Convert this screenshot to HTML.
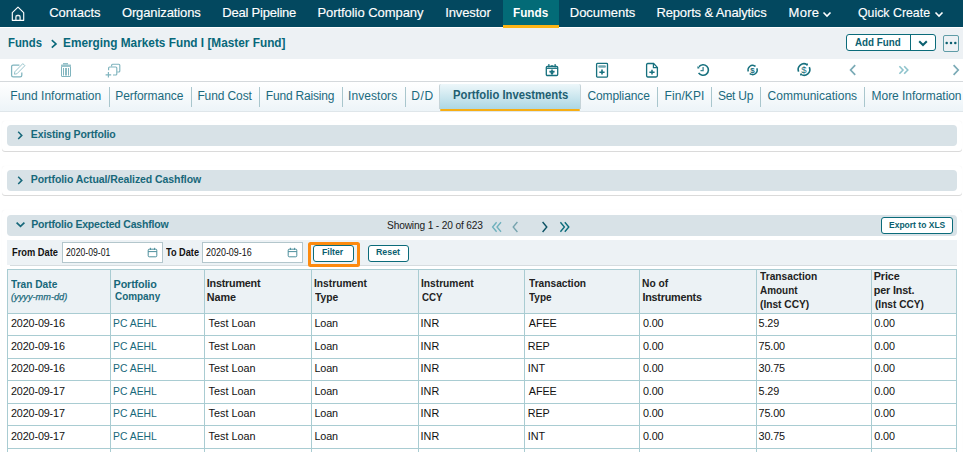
<!DOCTYPE html>
<html><head><meta charset="utf-8"><style>
html,body{margin:0;padding:0;width:963px;height:452px;overflow:hidden;background:#fff;position:relative;font-family:"Liberation Sans", sans-serif}
.t{position:absolute;white-space:nowrap;line-height:20px;font-family:"Liberation Sans", sans-serif}
svg{overflow:visible}
</style></head><body>
<div style="position:absolute;left:0px;top:0px;width:963px;height:27px;background:#03485f"></div>
<div style="position:absolute;left:0px;top:27px;width:963px;height:1px;background:#ffffff"></div>
<svg style="position:absolute;left:0px;top:0px" width="40" height="27" viewBox="0 0 40 27"><path d="M12.3 12.7 L18 7.2 L23.7 12.7 V20.3 H12.3 Z" fill="none" stroke="#fff" stroke-width="1.15" stroke-linejoin="round"/><path d="M15.9 20.3 V16.9 Q15.9 15.5 17.3 15.5 H18.7 Q20.1 15.5 20.1 16.9 V20.3" fill="none" stroke="#e8eef0" stroke-width="1.3"/></svg>
<div class="t" style="left:49.20px;top:3.00px;font-size:13px;font-weight:normal;color:#ffffff;letter-spacing:0.014px;font-style:normal;-webkit-text-stroke:0.15px #fff">Contacts</div>
<div class="t" style="left:121.90px;top:3.00px;font-size:13px;font-weight:normal;color:#ffffff;letter-spacing:-0.108px;font-style:normal;-webkit-text-stroke:0.15px #fff">Organizations</div>
<div class="t" style="left:222.30px;top:3.00px;font-size:13px;font-weight:normal;color:#ffffff;letter-spacing:-0.217px;font-style:normal;-webkit-text-stroke:0.15px #fff">Deal Pipeline</div>
<div class="t" style="left:317.40px;top:3.00px;font-size:13px;font-weight:normal;color:#ffffff;letter-spacing:-0.050px;font-style:normal;-webkit-text-stroke:0.15px #fff">Portfolio Company</div>
<div class="t" style="left:445.20px;top:3.00px;font-size:13px;font-weight:normal;color:#ffffff;letter-spacing:-0.100px;font-style:normal;-webkit-text-stroke:0.15px #fff">Investor</div>
<div class="t" style="left:569.80px;top:3.00px;font-size:13px;font-weight:normal;color:#ffffff;letter-spacing:-0.025px;font-style:normal;-webkit-text-stroke:0.15px #fff">Documents</div>
<div class="t" style="left:656.40px;top:3.00px;font-size:13px;font-weight:normal;color:#ffffff;letter-spacing:-0.133px;font-style:normal;-webkit-text-stroke:0.15px #fff">Reports &amp; Analytics</div>
<div class="t" style="left:788.50px;top:3.00px;font-size:13px;font-weight:normal;color:#ffffff;letter-spacing:0.300px;font-style:normal;-webkit-text-stroke:0.15px #fff">More</div>
<div class="t" style="left:857.65px;top:3.00px;font-size:13px;font-weight:normal;color:#ffffff;letter-spacing:0.000px;font-style:normal;transform:scaleX(0.9493);transform-origin:0 0;-webkit-text-stroke:0.15px #fff">Quick Create</div>
<div style="position:absolute;left:503px;top:0px;width:56px;height:25px;background:#036b77"></div>
<div style="position:absolute;left:503px;top:25px;width:56px;height:3px;background:#fdb515"></div>
<div class="t" style="left:512.80px;top:3.00px;font-size:13px;font-weight:bold;color:#ffffff;letter-spacing:0.000px;font-style:normal;transform:scaleX(0.9026);transform-origin:0 0;">Funds</div>
<svg style="position:absolute;left:822px;top:9px" width="10" height="10" viewBox="0 0 10 10"><path d="M1.5 3.5 L5 7 L8.5 3.5" fill="none" stroke="#fff" stroke-width="1.6"/></svg>
<svg style="position:absolute;left:934px;top:9px" width="10" height="10" viewBox="0 0 10 10"><path d="M1.5 3.5 L5 7 L8.5 3.5" fill="none" stroke="#fff" stroke-width="1.6"/></svg>
<div style="position:absolute;left:0px;top:28px;width:963px;height:31px;background:#edf1f4"></div>
<div class="t" style="left:7.63px;top:33.00px;font-size:13px;font-weight:bold;color:#08687a;letter-spacing:0.000px;font-style:normal;transform:scaleX(0.8711);transform-origin:0 0;">Funds</div>
<svg style="position:absolute;left:50px;top:39px" width="8" height="10" viewBox="0 0 8 10"><path d="M1.8 1.2 L6 4.9 L1.8 8.6" fill="none" stroke="#08687a" stroke-width="1.6"/></svg>
<div class="t" style="left:62.66px;top:33.00px;font-size:12.6px;font-weight:bold;color:#08687a;letter-spacing:0.000px;font-style:normal;transform:scaleX(0.9381);transform-origin:0 0;">Emerging Markets Fund I [Master Fund]</div>
<div style="position:absolute;left:846px;top:34px;width:89.5px;height:16.5px;background:#fff;border:1px solid #0b6b7a;border-radius:3px;box-sizing:border-box"></div>
<div style="position:absolute;left:910px;top:34px;width:1px;height:16.5px;background:#0b6b7a"></div>
<div class="t" style="left:854.70px;top:32.00px;font-size:10.8px;font-weight:bold;color:#0b5f70;letter-spacing:0.000px;font-style:normal;transform:scaleX(0.9060);transform-origin:0 0;">Add Fund</div>
<svg style="position:absolute;left:917px;top:39px" width="12" height="9" viewBox="0 0 12 9"><path d="M2.2 2.2 L6 6 L9.8 2.2" fill="none" stroke="#0b6070" stroke-width="2"/></svg>
<div style="position:absolute;left:943px;top:35px;width:16px;height:16.5px;border:1.3px solid #5f9ca7;border-radius:2px;box-sizing:border-box"></div>
<svg style="position:absolute;left:944px;top:40px" width="14" height="6" viewBox="0 0 14 6"><circle cx="2.7" cy="3" r="1.25" fill="#0b5f70"/><circle cx="7" cy="3" r="1.25" fill="#0b5f70"/><circle cx="11.3" cy="3" r="1.25" fill="#0b5f70"/></svg>
<div style="position:absolute;left:0px;top:59px;width:963px;height:22px;background:#fff"></div>
<div style="position:absolute;left:0px;top:81px;width:963px;height:1px;background:#d5d9dc"></div>
<svg style="position:absolute;left:10px;top:62px" width="17" height="16" viewBox="0 0 17 16"><path d="M9.4 3 H3.2 Q1.6 3 1.6 4.6 V13.2 Q1.6 14.8 3.2 14.8 H10.2 Q11.8 14.8 11.8 13.2 V10.4" fill="none" stroke="#7fb4be" stroke-width="1.25"/><path d="M4.4 12.2 L4.8 9.8 L12.8 1.6 L14.9 3.7 L6.9 11.8 Z" fill="none" stroke="#7fb4be" stroke-width="0.95" stroke-linejoin="round" opacity="0.85"/></svg>
<svg style="position:absolute;left:60px;top:62px" width="12" height="16" viewBox="0 0 12 16"><rect x="3" y="1" width="5" height="1.5" fill="#7fb4be" opacity="0.85"/><rect x="1" y="2.5" width="10" height="2.5" rx="0.5" fill="#7fb4be" opacity="0.8"/><path d="M1.5 5 V14 Q1.5 14.5 2 14.5 H10 Q10.5 14.5 10.5 14 V5" fill="none" stroke="#7fb4be" stroke-width="1"/><rect x="3" y="6" width="1" height="7.5" fill="#7fb4be"/><rect x="5" y="6" width="2" height="7.5" fill="#7fb4be" opacity="0.9"/><rect x="8" y="6" width="1" height="7.5" fill="#7fb4be"/></svg>
<svg style="position:absolute;left:104px;top:61.6px" width="18" height="18" viewBox="0 0 18 18"><path d="M7.6 4.4 V3.2 Q7.6 2.2 8.6 2.2 H14.8 Q15.8 2.2 15.8 3.2 V9 Q15.8 10 14.8 10 H13.2" fill="none" stroke="#7fb4be" stroke-width="1.15"/><path d="M4.6 8.2 V6 Q4.6 5 5.6 5 H11.8 Q12.8 5 12.8 6 V12 Q12.8 13 11.8 13 H9" fill="none" stroke="#7fb4be" stroke-width="1.15"/><path d="M4.4 10 V15.6 M1.6 12.8 H7.2" stroke="#7fb4be" stroke-width="1.15"/></svg>
<svg style="position:absolute;left:544px;top:62px" width="16" height="16" viewBox="0 0 16 16"><rect x="2.3" y="4.3" width="11.4" height="9.2" rx="1.1" fill="none" stroke="#16707e" stroke-width="1.3"/><rect x="2.3" y="5.6" width="11.4" height="1.3" fill="#16707e"/><rect x="4.2" y="2" width="1.3" height="3.4" rx="0.6" fill="#16707e"/><rect x="10.5" y="2" width="1.3" height="3.4" rx="0.6" fill="#16707e"/><rect x="6.7" y="3" width="2.6" height="1.4" rx="0.6" fill="#16707e" opacity="0.7"/><path d="M8 7.6 V12.2 M5.4 9.6 H10.6" stroke="#16707e" stroke-width="1.6"/><path d="M6.6 10.4 L8 12 L9.4 10.4" fill="none" stroke="#16707e" stroke-width="1.2"/></svg>
<svg style="position:absolute;left:594px;top:61px" width="16" height="18" viewBox="0 0 16 18"><rect x="2.6" y="2.4" width="10.9" height="13.7" rx="0.8" fill="none" stroke="#16707e" stroke-width="1.3"/><rect x="4.2" y="4.2" width="7.8" height="2.6" rx="1.3" fill="#16707e" opacity="0.6"/><path d="M8 8.6 V13.6 M5.4 11.2 H10.6" stroke="#16707e" stroke-width="1.6"/></svg>
<svg style="position:absolute;left:644px;top:61px" width="16" height="18" viewBox="0 0 16 18"><path d="M3.8 2.5 H9.6 L13.4 6.4 V14.6 Q13.4 16 12 16 H3.8 Q2.6 16 2.6 14.6 V3.8 Q2.6 2.5 3.8 2.5 Z" fill="none" stroke="#16707e" stroke-width="1.3"/><path d="M9.4 2.6 V6.6 H13.4" fill="none" stroke="#16707e" stroke-width="1.2"/><path d="M8 8.8 V13.6 M5.4 11.2 H10.6" stroke="#16707e" stroke-width="1.5"/></svg>
<svg style="position:absolute;left:692px;top:62px" width="18" height="16" viewBox="0 0 18 16"><path d="M6.92 4.74 A5.3 5.3 0 1 1 6.61 10.81" fill="none" stroke="#16707e" stroke-width="1.6"/><path d="M5.65 6.72 L5.25 4.34 L7.96 6.04 Z" fill="#16707e"/><path d="M11.10 5.00 V8.60 H8.50" fill="none" stroke="#16707e" stroke-width="1.3" opacity="0.85"/></svg>
<svg style="position:absolute;left:742px;top:62px" width="20" height="16" viewBox="0 0 20 16"><path d="M14.87 6.28 A4.6 4.6 0 0 1 8.30 11.98 M6.28 9.57 A4.6 4.6 0 0 1 12.90 4.02" fill="none" stroke="#16707e" stroke-width="1.4"/><path d="M13.83 4.46 L13.14 2.79 L12.09 4.94 Z M7.37 11.54 L8.06 13.21 L9.11 11.06 Z" fill="#16707e"/><text x="10.60" y="11.20" font-family="Liberation Sans" font-size="8" font-weight="bold" text-anchor="middle" fill="#16707e">$</text></svg>
<svg style="position:absolute;left:792px;top:62px" width="24" height="16" viewBox="0 0 24 16"><path d="M17.30 5.14 A5.8 5.8 0 0 1 8.93 12.42 M6.62 9.67 A5.8 5.8 0 0 1 15.07 2.58" fill="none" stroke="#16707e" stroke-width="1.6"/><path d="M16.15 3.14 L15.40 1.11 L14.05 3.65 Z M7.85 11.86 L8.60 13.89 L9.95 11.35 Z" fill="#16707e"/><text x="12.00" y="11.10" font-family="Liberation Sans" font-size="9.5" text-anchor="middle" fill="#16707e">$</text></svg>
<svg style="position:absolute;left:848px;top:63px" width="10" height="14" viewBox="0 0 10 14"><path d="M7.2 2.2 L2.6 7 L7.2 11.8" fill="none" stroke="#7aaab6" stroke-width="1.7"/></svg>
<svg style="position:absolute;left:897px;top:63px" width="14" height="14" viewBox="0 0 14 14"><path d="M2.4 3.2 L6 7 L2.4 10.8 M7.2 3.2 L10.8 7 L7.2 10.8" fill="none" stroke="#8ec3cc" stroke-width="1.6"/></svg>
<svg style="position:absolute;left:951px;top:63px" width="10" height="14" viewBox="0 0 10 14"><path d="M2.6 2.2 L7.2 7 L2.6 11.8" fill="none" stroke="#7aaab6" stroke-width="1.7"/></svg>
<div style="position:absolute;left:0px;top:82px;width:963px;height:29px;background:linear-gradient(#ffffff,#edf4f8)"></div>
<div style="position:absolute;left:0px;top:111px;width:963px;height:1px;background:#dfe6ea"></div>
<div style="position:absolute;left:109px;top:87px;width:1px;height:20px;background:#a9c6cd"></div>
<div style="position:absolute;left:191px;top:87px;width:1px;height:20px;background:#a9c6cd"></div>
<div style="position:absolute;left:259px;top:87px;width:1px;height:20px;background:#a9c6cd"></div>
<div style="position:absolute;left:342px;top:87px;width:1px;height:20px;background:#a9c6cd"></div>
<div style="position:absolute;left:405px;top:87px;width:1px;height:20px;background:#a9c6cd"></div>
<div style="position:absolute;left:657px;top:87px;width:1px;height:20px;background:#a9c6cd"></div>
<div style="position:absolute;left:711px;top:87px;width:1px;height:20px;background:#a9c6cd"></div>
<div style="position:absolute;left:760px;top:87px;width:1px;height:20px;background:#a9c6cd"></div>
<div style="position:absolute;left:864px;top:87px;width:1px;height:20px;background:#a9c6cd"></div>
<div class="t" style="left:10.30px;top:86.00px;font-size:12px;font-weight:normal;color:#1b6a7e;letter-spacing:0.013px;font-style:normal;">Fund Information</div>
<div class="t" style="left:115.20px;top:86.00px;font-size:12px;font-weight:normal;color:#1b6a7e;letter-spacing:-0.050px;font-style:normal;">Performance</div>
<div class="t" style="left:197.40px;top:86.00px;font-size:12px;font-weight:normal;color:#1b6a7e;letter-spacing:-0.113px;font-style:normal;">Fund Cost</div>
<div class="t" style="left:265.80px;top:86.00px;font-size:12px;font-weight:normal;color:#1b6a7e;letter-spacing:-0.191px;font-style:normal;">Fund Raising</div>
<div class="t" style="left:348.00px;top:86.00px;font-size:12px;font-weight:normal;color:#1b6a7e;letter-spacing:0.062px;font-style:normal;">Investors</div>
<div class="t" style="left:411.20px;top:86.00px;font-size:12px;font-weight:normal;color:#1b6a7e;letter-spacing:0.600px;font-style:normal;">D/D</div>
<div class="t" style="left:587.40px;top:86.00px;font-size:12px;font-weight:normal;color:#1b6a7e;letter-spacing:-0.100px;font-style:normal;">Compliance</div>
<div class="t" style="left:664.60px;top:86.00px;font-size:12px;font-weight:normal;color:#1b6a7e;letter-spacing:0.067px;font-style:normal;">Fin/KPI</div>
<div class="t" style="left:717.90px;top:86.00px;font-size:12px;font-weight:normal;color:#1b6a7e;letter-spacing:-0.240px;font-style:normal;">Set Up</div>
<div class="t" style="left:767.60px;top:86.00px;font-size:12px;font-weight:normal;color:#1b6a7e;letter-spacing:0.008px;font-style:normal;">Communications</div>
<div class="t" style="left:871.60px;top:86.00px;font-size:12px;font-weight:normal;color:#1b6a7e;letter-spacing:-0.050px;font-style:normal;">More Information</div>
<div style="position:absolute;left:439px;top:84px;width:142px;height:25px;background:linear-gradient(#edf7fa,#acd7e4);border-left:1px solid #c5d3d8;border-right:1px solid #c5d3d8;box-sizing:border-box;border-radius:2px 2px 0 0"></div>
<div style="position:absolute;left:440px;top:108.6px;width:140px;height:2.2px;background:#f7ae14;border-radius:1px"></div>
<div class="t" style="left:452.86px;top:85.00px;font-size:12px;font-weight:bold;color:#1f5f72;letter-spacing:0.000px;font-style:normal;transform:scaleX(0.9388);transform-origin:0 0;">Portfolio Investments</div>
<div style="position:absolute;left:2px;top:121px;width:960px;height:30px;background:#fff;border-radius:3px;box-shadow:0 1px 0 rgba(0,0,0,0.14), 0 0 1px rgba(0,0,0,0.07)"></div>
<div style="position:absolute;left:7px;top:125px;width:950px;height:20.5px;background:#d8e2e7;border-radius:4px"></div>
<svg style="position:absolute;left:15.2px;top:129.8px" width="10" height="11" viewBox="0 0 10 11"><path d="M3.2 1.8 L6.8 5.4 L3.2 9" fill="none" stroke="#17687a" stroke-width="1.5"/></svg>
<div class="t" style="left:30.80px;top:124.00px;font-size:10.5px;font-weight:bold;color:#17687a;letter-spacing:-0.118px;font-style:normal;">Existing Portfolio</div>
<div style="position:absolute;left:2px;top:166px;width:960px;height:29.30000000000001px;background:#fff;border-radius:3px;box-shadow:0 1px 0 rgba(0,0,0,0.14), 0 0 1px rgba(0,0,0,0.07)"></div>
<div style="position:absolute;left:7px;top:170px;width:950px;height:20.5px;background:#d8e2e7;border-radius:4px"></div>
<svg style="position:absolute;left:15.2px;top:174.8px" width="10" height="11" viewBox="0 0 10 11"><path d="M3.2 1.8 L6.8 5.4 L3.2 9" fill="none" stroke="#17687a" stroke-width="1.5"/></svg>
<div class="t" style="left:30.80px;top:169.00px;font-size:10.5px;font-weight:bold;color:#17687a;letter-spacing:-0.076px;font-style:normal;">Portfolio Actual/Realized Cashflow</div>
<div style="position:absolute;left:2px;top:210px;width:960px;height:260px;background:#fff;border-radius:3px;box-shadow:0 1px 0 rgba(0,0,0,0.14), 0 0 1px rgba(0,0,0,0.07)"></div>
<div style="position:absolute;left:7px;top:215px;width:950px;height:20.5px;background:#d8e2e7;border-radius:4px"></div>
<svg style="position:absolute;left:15px;top:220px" width="11" height="10" viewBox="0 0 11 10"><path d="M1.6 2.6 L5.5 6.4 L9.4 2.6" fill="none" stroke="#17687a" stroke-width="1.7"/></svg>
<div class="t" style="left:31.20px;top:214.40px;font-size:10.5px;font-weight:bold;color:#17687a;letter-spacing:-0.188px;font-style:normal;">Portfolio Expected Cashflow</div>
<div class="t" style="left:387.00px;top:216.40px;font-size:10.2px;font-weight:normal;color:#1a1a1a;letter-spacing:-0.160px;font-style:normal;">Showing 1 - 20 of 623</div>
<svg style="position:absolute;left:489.5px;top:220.5px" width="14" height="12" viewBox="0 0 14 12"><path d="M6.6 1.2 L2.6 6 L6.6 10.8 M11 1.2 L7 6 L11 10.8" fill="none" stroke="#6db0bc" stroke-width="1.35"/></svg>
<svg style="position:absolute;left:510px;top:220.5px" width="10" height="12" viewBox="0 0 10 12"><path d="M7.4 1 L3.2 6 L7.4 11" fill="none" stroke="#76a3ae" stroke-width="1.35"/></svg>
<svg style="position:absolute;left:539.5px;top:220.5px" width="10" height="12" viewBox="0 0 10 12"><path d="M2.6 1 L6.8 6 L2.6 11" fill="none" stroke="#0b5163" stroke-width="1.4"/></svg>
<svg style="position:absolute;left:557.5px;top:220.5px" width="14" height="12" viewBox="0 0 14 12"><path d="M2.4 1.2 L6.4 6 L2.4 10.8 M6.8 1.2 L10.8 6 L6.8 10.8" fill="none" stroke="#0a6c7b" stroke-width="1.4"/></svg>
<div style="position:absolute;left:881px;top:217px;width:72px;height:17px;background:#fff;border:1px solid #0b6b7a;border-radius:3px;box-sizing:border-box"></div>
<div class="t" style="left:888.51px;top:215.00px;font-size:9.6px;font-weight:bold;color:#0b5f70;letter-spacing:0.000px;font-style:normal;transform:scaleX(0.8871);transform-origin:0 0;">Export to XLS</div>
<div style="position:absolute;left:7px;top:240px;width:950px;height:25px;background:#edf2f5"></div>
<div style="position:absolute;left:10px;top:265px;width:947px;height:1px;background:#d6dcdf"></div>
<div class="t" style="left:12.47px;top:243.00px;font-size:10px;font-weight:bold;color:#111;letter-spacing:0.000px;font-style:normal;transform:scaleX(0.9292);transform-origin:0 0;">From Date</div>
<div style="position:absolute;left:62px;top:242px;width:101px;height:21px;background:#fff;border:1px solid #b3c6cc;box-sizing:border-box"></div>
<div class="t" style="left:65.80px;top:242.00px;font-size:10.5px;font-weight:normal;color:#111;letter-spacing:0.000px;font-style:normal;transform:scaleX(0.8245);transform-origin:0 0;">2020-09-01</div>
<svg style="position:absolute;left:147px;top:247px" width="11" height="11" viewBox="0 0 11 11"><rect x="1.2" y="2.2" width="8.6" height="7.6" rx="1" fill="none" stroke="#4d8f9c" stroke-width="1"/><path d="M1.2 4.6 H9.8 M3.4 0.8 V3 M7.6 0.8 V3" stroke="#4d8f9c" stroke-width="1"/></svg>
<div class="t" style="left:166.00px;top:243.00px;font-size:10px;font-weight:bold;color:#111;letter-spacing:0.000px;font-style:normal;transform:scaleX(0.9194);transform-origin:0 0;">To Date</div>
<div style="position:absolute;left:202px;top:242px;width:101px;height:21px;background:#fff;border:1px solid #b3c6cc;box-sizing:border-box"></div>
<div class="t" style="left:205.90px;top:242.00px;font-size:10.5px;font-weight:normal;color:#111;letter-spacing:0.000px;font-style:normal;transform:scaleX(0.8509);transform-origin:0 0;">2020-09-16</div>
<svg style="position:absolute;left:287px;top:247px" width="11" height="11" viewBox="0 0 11 11"><rect x="1.2" y="2.2" width="8.6" height="7.6" rx="1" fill="none" stroke="#4d8f9c" stroke-width="1"/><path d="M1.2 4.6 H9.8 M3.4 0.8 V3 M7.6 0.8 V3" stroke="#4d8f9c" stroke-width="1"/></svg>
<div style="position:absolute;left:307.5px;top:241.6px;width:52px;height:25.3px;border:3.1px solid #fd8a0e;box-sizing:border-box;border-radius:2.5px"></div>
<div style="position:absolute;left:313px;top:245px;width:41px;height:16.5px;background:#fff;border:1px solid #0b6b7a;border-radius:3px;box-sizing:border-box"></div>
<div class="t" style="left:322.40px;top:242.30px;font-size:9.6px;font-weight:bold;color:#0b5f70;letter-spacing:0.000px;font-style:normal;transform:scaleX(0.9043);transform-origin:0 0;">Filter</div>
<div style="position:absolute;left:368px;top:245px;width:41px;height:16.5px;background:#fff;border:1px solid #0b6b7a;border-radius:3px;box-sizing:border-box"></div>
<div class="t" style="left:376.38px;top:242.30px;font-size:9.6px;font-weight:bold;color:#0b5f70;letter-spacing:0.000px;font-style:normal;transform:scaleX(0.9200);transform-origin:0 0;">Reset</div>
<div style="position:absolute;left:7px;top:269px;width:949px;height:44px;background:#ecf2f5"></div>
<div style="position:absolute;left:7px;top:269px;width:949px;height:1px;background:#a9ccd2"></div>
<div style="position:absolute;left:7px;top:313px;width:949px;height:1px;background:#a9ccd2"></div>
<div style="position:absolute;left:7px;top:335px;width:949px;height:1px;background:#a9ccd2"></div>
<div style="position:absolute;left:7px;top:358px;width:949px;height:1px;background:#a9ccd2"></div>
<div style="position:absolute;left:7px;top:380px;width:949px;height:1px;background:#a9ccd2"></div>
<div style="position:absolute;left:7px;top:403px;width:949px;height:1px;background:#a9ccd2"></div>
<div style="position:absolute;left:7px;top:425px;width:949px;height:1px;background:#a9ccd2"></div>
<div style="position:absolute;left:7px;top:448px;width:949px;height:1px;background:#a9ccd2"></div>
<div style="position:absolute;left:7px;top:269px;width:1px;height:190px;background:#a9ccd2"></div>
<div style="position:absolute;left:110px;top:269px;width:1px;height:190px;background:#a9ccd2"></div>
<div style="position:absolute;left:204px;top:269px;width:1px;height:190px;background:#a9ccd2"></div>
<div style="position:absolute;left:311px;top:269px;width:1px;height:190px;background:#a9ccd2"></div>
<div style="position:absolute;left:418px;top:269px;width:1px;height:190px;background:#a9ccd2"></div>
<div style="position:absolute;left:524px;top:269px;width:1px;height:190px;background:#a9ccd2"></div>
<div style="position:absolute;left:639px;top:269px;width:1px;height:190px;background:#a9ccd2"></div>
<div style="position:absolute;left:756px;top:269px;width:1px;height:190px;background:#a9ccd2"></div>
<div style="position:absolute;left:871px;top:269px;width:1px;height:190px;background:#a9ccd2"></div>
<div style="position:absolute;left:956px;top:269px;width:1px;height:190px;background:#a9ccd2"></div>
<div class="t" style="left:11.20px;top:274.00px;font-size:10.8px;font-weight:bold;color:#17687a;letter-spacing:0.000px;font-style:normal;transform:scaleX(0.9408);transform-origin:0 0;">Tran Date</div>
<div class="t" style="left:10.60px;top:287.00px;font-size:9.8px;font-weight:normal;color:#17687a;letter-spacing:0.000px;font-style:italic;transform:scaleX(0.9407);transform-origin:0 0;-webkit-text-stroke:0.25px #17687a">(yyyy-mm-dd)</div>
<div class="t" style="left:113.60px;top:274.00px;font-size:10.8px;font-weight:bold;color:#17687a;letter-spacing:-0.150px;font-style:normal;">Portfolio</div>
<div class="t" style="left:114.60px;top:286.00px;font-size:10.8px;font-weight:bold;color:#17687a;letter-spacing:0.000px;font-style:normal;transform:scaleX(0.9184);transform-origin:0 0;">Company</div>
<div class="t" style="left:206.80px;top:273.20px;font-size:10.8px;font-weight:bold;color:#222;letter-spacing:-0.222px;font-style:normal;">Instrument</div>
<div class="t" style="left:206.80px;top:286.70px;font-size:10.8px;font-weight:bold;color:#222;letter-spacing:-0.033px;font-style:normal;">Name</div>
<div class="t" style="left:314.05px;top:273.20px;font-size:10.8px;font-weight:bold;color:#222;letter-spacing:0.000px;font-style:normal;transform:scaleX(0.9473);transform-origin:0 0;">Instrument</div>
<div class="t" style="left:315.00px;top:286.70px;font-size:10.8px;font-weight:bold;color:#222;letter-spacing:0.000px;font-style:normal;transform:scaleX(0.9542);transform-origin:0 0;">Type</div>
<div class="t" style="left:421.05px;top:273.20px;font-size:10.8px;font-weight:bold;color:#222;letter-spacing:0.000px;font-style:normal;transform:scaleX(0.9455);transform-origin:0 0;">Instrument</div>
<div class="t" style="left:422.00px;top:286.70px;font-size:10.8px;font-weight:bold;color:#222;letter-spacing:0.000px;font-style:normal;transform:scaleX(0.9000);transform-origin:0 0;">CCY</div>
<div class="t" style="left:529.10px;top:273.20px;font-size:10.8px;font-weight:bold;color:#222;letter-spacing:0.000px;font-style:normal;transform:scaleX(0.9417);transform-origin:0 0;">Transaction</div>
<div class="t" style="left:529.10px;top:286.70px;font-size:10.8px;font-weight:bold;color:#222;letter-spacing:0.000px;font-style:normal;transform:scaleX(0.9250);transform-origin:0 0;">Type</div>
<div class="t" style="left:642.45px;top:273.20px;font-size:10.8px;font-weight:bold;color:#222;letter-spacing:0.000px;font-style:normal;transform:scaleX(0.9481);transform-origin:0 0;">No of</div>
<div class="t" style="left:642.40px;top:286.70px;font-size:10.8px;font-weight:bold;color:#222;letter-spacing:-0.220px;font-style:normal;">Instruments</div>
<div class="t" style="left:759.80px;top:266.20px;font-size:10.8px;font-weight:bold;color:#222;letter-spacing:0.000px;font-style:normal;transform:scaleX(0.9450);transform-origin:0 0;">Transaction</div>
<div class="t" style="left:759.80px;top:280.00px;font-size:10.8px;font-weight:bold;color:#222;letter-spacing:0.000px;font-style:normal;transform:scaleX(0.9195);transform-origin:0 0;">Amount</div>
<div class="t" style="left:759.80px;top:294.30px;font-size:10.8px;font-weight:bold;color:#222;letter-spacing:0.000px;font-style:normal;transform:scaleX(0.9442);transform-origin:0 0;">(Inst CCY)</div>
<div class="t" style="left:873.70px;top:266.20px;font-size:10.8px;font-weight:bold;color:#222;letter-spacing:-0.075px;font-style:normal;">Price</div>
<div class="t" style="left:873.70px;top:280.00px;font-size:10.8px;font-weight:bold;color:#222;letter-spacing:-0.150px;font-style:normal;">per Inst.</div>
<div class="t" style="left:874.70px;top:294.30px;font-size:10.8px;font-weight:bold;color:#222;letter-spacing:0.000px;font-style:normal;transform:scaleX(0.9365);transform-origin:0 0;">(Inst CCY)</div>
<div class="t" style="left:11.00px;top:313.00px;font-size:10.8px;font-weight:normal;color:#111;letter-spacing:-0.144px;font-style:normal;">2020-09-16</div>
<div class="t" style="left:113.44px;top:313.00px;font-size:10.8px;font-weight:normal;color:#17687a;letter-spacing:0.000px;font-style:normal;transform:scaleX(0.9614);transform-origin:0 0;">PC AEHL</div>
<div class="t" style="left:208.50px;top:313.00px;font-size:10.8px;font-weight:normal;color:#111;letter-spacing:0.025px;font-style:normal;">Test Loan</div>
<div class="t" style="left:314.40px;top:313.00px;font-size:10.8px;font-weight:normal;color:#111;letter-spacing:-0.100px;font-style:normal;">Loan</div>
<div class="t" style="left:420.40px;top:313.00px;font-size:10.8px;font-weight:normal;color:#111;letter-spacing:0.100px;font-style:normal;">INR</div>
<div class="t" style="left:528.80px;top:313.00px;font-size:10.8px;font-weight:normal;color:#111;letter-spacing:-0.100px;font-style:normal;">AFEE</div>
<div class="t" style="left:643.00px;top:313.00px;font-size:10.8px;font-weight:normal;color:#111;letter-spacing:-0.133px;font-style:normal;">0.00</div>
<div class="t" style="left:758.50px;top:313.00px;font-size:10.8px;font-weight:normal;color:#111;letter-spacing:-0.100px;font-style:normal;">5.29</div>
<div class="t" style="left:874.30px;top:313.00px;font-size:10.8px;font-weight:normal;color:#111;letter-spacing:-0.133px;font-style:normal;">0.00</div>
<div class="t" style="left:11.00px;top:336.00px;font-size:10.8px;font-weight:normal;color:#111;letter-spacing:-0.144px;font-style:normal;">2020-09-16</div>
<div class="t" style="left:113.44px;top:336.00px;font-size:10.8px;font-weight:normal;color:#17687a;letter-spacing:0.000px;font-style:normal;transform:scaleX(0.9614);transform-origin:0 0;">PC AEHL</div>
<div class="t" style="left:208.50px;top:336.00px;font-size:10.8px;font-weight:normal;color:#111;letter-spacing:0.025px;font-style:normal;">Test Loan</div>
<div class="t" style="left:314.40px;top:336.00px;font-size:10.8px;font-weight:normal;color:#111;letter-spacing:-0.100px;font-style:normal;">Loan</div>
<div class="t" style="left:420.40px;top:336.00px;font-size:10.8px;font-weight:normal;color:#111;letter-spacing:0.100px;font-style:normal;">INR</div>
<div class="t" style="left:527.80px;top:336.00px;font-size:10.8px;font-weight:normal;color:#111;letter-spacing:-0.100px;font-style:normal;">REP</div>
<div class="t" style="left:643.00px;top:336.00px;font-size:10.8px;font-weight:normal;color:#111;letter-spacing:-0.133px;font-style:normal;">0.00</div>
<div class="t" style="left:758.50px;top:336.00px;font-size:10.8px;font-weight:normal;color:#111;letter-spacing:-0.100px;font-style:normal;">75.00</div>
<div class="t" style="left:874.30px;top:336.00px;font-size:10.8px;font-weight:normal;color:#111;letter-spacing:-0.133px;font-style:normal;">0.00</div>
<div class="t" style="left:11.00px;top:358.00px;font-size:10.8px;font-weight:normal;color:#111;letter-spacing:-0.144px;font-style:normal;">2020-09-16</div>
<div class="t" style="left:113.44px;top:358.00px;font-size:10.8px;font-weight:normal;color:#17687a;letter-spacing:0.000px;font-style:normal;transform:scaleX(0.9614);transform-origin:0 0;">PC AEHL</div>
<div class="t" style="left:208.50px;top:358.00px;font-size:10.8px;font-weight:normal;color:#111;letter-spacing:0.025px;font-style:normal;">Test Loan</div>
<div class="t" style="left:314.40px;top:358.00px;font-size:10.8px;font-weight:normal;color:#111;letter-spacing:-0.100px;font-style:normal;">Loan</div>
<div class="t" style="left:420.40px;top:358.00px;font-size:10.8px;font-weight:normal;color:#111;letter-spacing:0.100px;font-style:normal;">INR</div>
<div class="t" style="left:527.80px;top:358.00px;font-size:10.8px;font-weight:normal;color:#111;letter-spacing:-0.100px;font-style:normal;">INT</div>
<div class="t" style="left:643.00px;top:358.00px;font-size:10.8px;font-weight:normal;color:#111;letter-spacing:-0.133px;font-style:normal;">0.00</div>
<div class="t" style="left:758.50px;top:358.00px;font-size:10.8px;font-weight:normal;color:#111;letter-spacing:-0.100px;font-style:normal;">30.75</div>
<div class="t" style="left:874.30px;top:358.00px;font-size:10.8px;font-weight:normal;color:#111;letter-spacing:-0.133px;font-style:normal;">0.00</div>
<div class="t" style="left:11.00px;top:381.00px;font-size:10.8px;font-weight:normal;color:#111;letter-spacing:-0.144px;font-style:normal;">2020-09-17</div>
<div class="t" style="left:113.44px;top:381.00px;font-size:10.8px;font-weight:normal;color:#17687a;letter-spacing:0.000px;font-style:normal;transform:scaleX(0.9614);transform-origin:0 0;">PC AEHL</div>
<div class="t" style="left:208.50px;top:381.00px;font-size:10.8px;font-weight:normal;color:#111;letter-spacing:0.025px;font-style:normal;">Test Loan</div>
<div class="t" style="left:314.40px;top:381.00px;font-size:10.8px;font-weight:normal;color:#111;letter-spacing:-0.100px;font-style:normal;">Loan</div>
<div class="t" style="left:420.40px;top:381.00px;font-size:10.8px;font-weight:normal;color:#111;letter-spacing:0.100px;font-style:normal;">INR</div>
<div class="t" style="left:528.80px;top:381.00px;font-size:10.8px;font-weight:normal;color:#111;letter-spacing:-0.100px;font-style:normal;">AFEE</div>
<div class="t" style="left:643.00px;top:381.00px;font-size:10.8px;font-weight:normal;color:#111;letter-spacing:-0.133px;font-style:normal;">0.00</div>
<div class="t" style="left:758.50px;top:381.00px;font-size:10.8px;font-weight:normal;color:#111;letter-spacing:-0.100px;font-style:normal;">5.29</div>
<div class="t" style="left:874.30px;top:381.00px;font-size:10.8px;font-weight:normal;color:#111;letter-spacing:-0.133px;font-style:normal;">0.00</div>
<div class="t" style="left:11.00px;top:403.00px;font-size:10.8px;font-weight:normal;color:#111;letter-spacing:-0.144px;font-style:normal;">2020-09-17</div>
<div class="t" style="left:113.44px;top:403.00px;font-size:10.8px;font-weight:normal;color:#17687a;letter-spacing:0.000px;font-style:normal;transform:scaleX(0.9614);transform-origin:0 0;">PC AEHL</div>
<div class="t" style="left:208.50px;top:403.00px;font-size:10.8px;font-weight:normal;color:#111;letter-spacing:0.025px;font-style:normal;">Test Loan</div>
<div class="t" style="left:314.40px;top:403.00px;font-size:10.8px;font-weight:normal;color:#111;letter-spacing:-0.100px;font-style:normal;">Loan</div>
<div class="t" style="left:420.40px;top:403.00px;font-size:10.8px;font-weight:normal;color:#111;letter-spacing:0.100px;font-style:normal;">INR</div>
<div class="t" style="left:527.80px;top:403.00px;font-size:10.8px;font-weight:normal;color:#111;letter-spacing:-0.100px;font-style:normal;">REP</div>
<div class="t" style="left:643.00px;top:403.00px;font-size:10.8px;font-weight:normal;color:#111;letter-spacing:-0.133px;font-style:normal;">0.00</div>
<div class="t" style="left:758.50px;top:403.00px;font-size:10.8px;font-weight:normal;color:#111;letter-spacing:-0.100px;font-style:normal;">75.00</div>
<div class="t" style="left:874.30px;top:403.00px;font-size:10.8px;font-weight:normal;color:#111;letter-spacing:-0.133px;font-style:normal;">0.00</div>
<div class="t" style="left:11.00px;top:426.00px;font-size:10.8px;font-weight:normal;color:#111;letter-spacing:-0.144px;font-style:normal;">2020-09-17</div>
<div class="t" style="left:113.44px;top:426.00px;font-size:10.8px;font-weight:normal;color:#17687a;letter-spacing:0.000px;font-style:normal;transform:scaleX(0.9614);transform-origin:0 0;">PC AEHL</div>
<div class="t" style="left:208.50px;top:426.00px;font-size:10.8px;font-weight:normal;color:#111;letter-spacing:0.025px;font-style:normal;">Test Loan</div>
<div class="t" style="left:314.40px;top:426.00px;font-size:10.8px;font-weight:normal;color:#111;letter-spacing:-0.100px;font-style:normal;">Loan</div>
<div class="t" style="left:420.40px;top:426.00px;font-size:10.8px;font-weight:normal;color:#111;letter-spacing:0.100px;font-style:normal;">INR</div>
<div class="t" style="left:527.80px;top:426.00px;font-size:10.8px;font-weight:normal;color:#111;letter-spacing:-0.100px;font-style:normal;">INT</div>
<div class="t" style="left:643.00px;top:426.00px;font-size:10.8px;font-weight:normal;color:#111;letter-spacing:-0.133px;font-style:normal;">0.00</div>
<div class="t" style="left:758.50px;top:426.00px;font-size:10.8px;font-weight:normal;color:#111;letter-spacing:-0.100px;font-style:normal;">30.75</div>
<div class="t" style="left:874.30px;top:426.00px;font-size:10.8px;font-weight:normal;color:#111;letter-spacing:-0.133px;font-style:normal;">0.00</div>
</body></html>
